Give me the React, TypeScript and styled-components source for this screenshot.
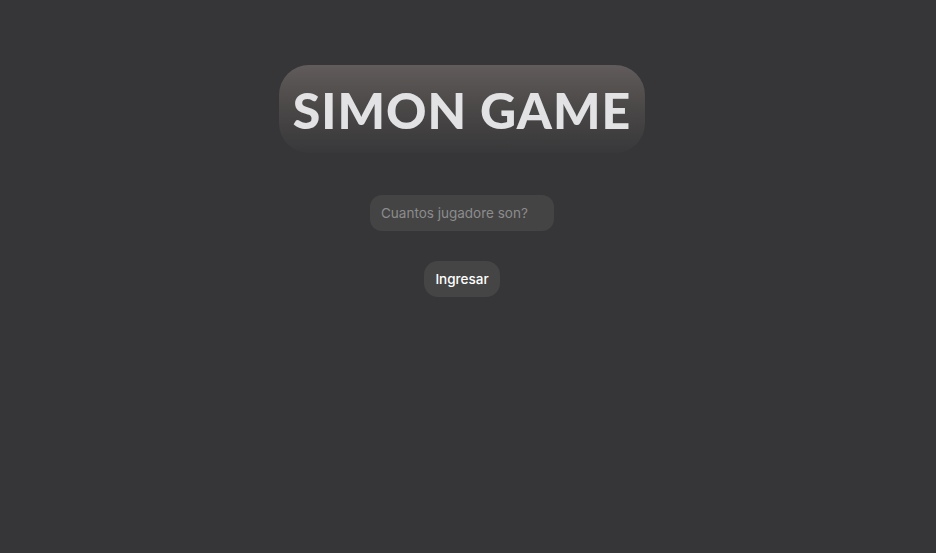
import React from "react";
import styled, { createGlobalStyle } from "styled-components";

const Global = createGlobalStyle`
  html, body { margin: 0; padding: 0; background: #363638; }
  body { font-family: "Inter", "Noto Sans", sans-serif; }
`;

const Page = styled.div`
  min-height: 553px;
  display: flex;
  flex-direction: column;
  align-items: center;
  padding-top: 65px;
  padding-right: 12px;
  box-sizing: border-box;
`;

const TitleBox = styled.h1`
  margin: 0;
  width: 366px;
  height: 88px;
  border-radius: 30px;
  background: linear-gradient(180deg, #615c5b 0%, #4a4747 50%, #38383a 100%);
  display: flex;
  align-items: center;
  justify-content: center;
  font-family: "Lato", sans-serif;
  font-weight: 900;
  font-size: 50px;
  letter-spacing: 1px;
  color: #e2e2e4;
  box-sizing: border-box;
  padding-top: 2px;
`;

const Input = styled.input`
  margin-top: 42px;
  width: 184px;
  height: 36px;
  box-sizing: border-box;
  border: none;
  outline: none;
  border-radius: 12px;
  background: #444444;
  padding: 0 11px;
  font-family: "Inter", sans-serif;
  font-size: 13.5px;
  color: #dddddd;
  &::placeholder { color: #8c8c8c; }
`;

const Button = styled.button`
  margin-top: 30px;
  height: 36px;
  width: 76px;
  border: none;
  border-radius: 14px;
  background: #454545;
  color: #ffffff;
  font-family: "Inter", sans-serif;
  font-weight: 500;
  font-size: 13.5px;
  padding: 0;
  cursor: pointer;
`;

export default function App() {
  return (
    <>
      <Global />
      <Page>
        <TitleBox>SIMON GAME</TitleBox>
        <Input placeholder="Cuantos jugadore son?" />
        <Button>Ingresar</Button>
      </Page>
    </>
  );
}
